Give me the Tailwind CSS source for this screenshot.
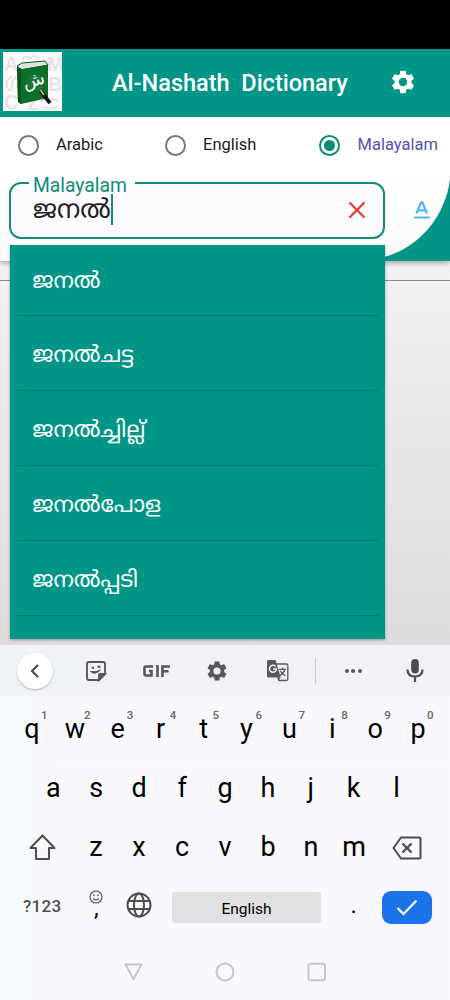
<!DOCTYPE html>
<html lang="ml">
<head>
<meta charset="utf-8">
<title>Al-Nashath Dictionary</title>
<script src="https://cdn.jsdelivr.net/npm/@tailwindcss/browser@4"></script>
</head>
<body class="w-[450px] h-[1000px] overflow-hidden bg-black font-['Roboto','Noto_Sans_Malayalam','Noto_Sans',sans-serif] flex flex-col">
<div class="h-[49px] shrink-0 bg-black"></div>
<header class="h-[68px] shrink-0 bg-[#009587] flex items-center pl-[3px] relative">
  <svg class="w-[59px] h-[59px] -mt-[3px] shrink-0" viewBox="0 0 59 59">
    <rect width="59" height="59" fill="#fff"/>
    <g fill="#e4e4e4" font-family="Liberation Sans" font-weight="700" font-size="20">
      <text x="1" y="19">A</text><text x="44" y="19">M</text><text x="45" y="39">B</text><text x="1" y="57">C</text><text x="24" y="58">Z</text>
    </g>
    <g fill="none" stroke="#e4e4e4" stroke-width="2.200">
      <path d="M9 24Q2 28 4 35Q6 39 9 38M14 24Q7 30 10 37M19 8Q23 1 27 7Q31 1 35 7M38 50Q42 44 46 50Q50 44 55 50M39 55Q47 59 56 54"/>
    </g>
    <path d="M14 14L19 11L42 9L45 13L18 18Z" fill="#e2e2e2" stroke="#0a5a22" stroke-width="1"/>
    <path d="M14 15L19 17L45 13V46L18 52L15 50Z" fill="#0b6f2b"/>
    <path d="M14 14L18 17V52L15 50Z" fill="#07541d"/>
    <circle cx="32" cy="30" r="8" fill="#22803f" opacity=".6"/>
    <text x="31.500" y="34" fill="#fff" font-family="DejaVu Sans" font-size="18" text-anchor="middle" transform="rotate(-14 31 31)">ش</text>
    <path d="M37.500 39L47 51" stroke="#16140f" stroke-width="3.800"/><path d="M37.500 38L41 43" stroke="#d8c48a" stroke-width="1.500"/>
  </svg>
  <h1 class="ml-[50px] text-white text-[23.500px] leading-[28px] font-medium whitespace-pre">Al-Nashath  Dictionary</h1>
  <svg class="absolute left-[389px] top-[19px] w-[28px] h-[28px]" viewBox="0 0 24 24" fill="#fff"><path d="M19.140 12.940c.04-.3.06-.61.06-.94s-.02-.64-.07-.94l2.030-1.580c.18-.14.23-.41.12-.61l-1.920-3.320c-.12-.22-.37-.29-.59-.22l-2.390.96c-.5-.38-1.030-.7-1.620-.94l-.36-2.540c-.04-.24-.24-.41-.48-.41h-3.840c-.24 0-.43.17-.47.41l-.36 2.540c-.59.24-1.130.57-1.620.94l-2.390-.96c-.22-.08-.47 0-.59.22L2.740 8.870c-.12.21-.08.47.12.61l2.030 1.580c-.05.3-.09.63-.09.94s.02.64.07.94l-2.030 1.580c-.18.14-.23.41-.12.61l1.920 3.320c.12.22.37.29.59.22l2.390-.96c.5.38 1.030.7 1.620.94l.36 2.540c.05.24.24.41.48.41h3.840c.24 0 .44-.17.47-.41l.36-2.540c.59-.24 1.130-.56 1.620-.94l2.390.96c.22.08.47 0 .59-.22l1.920-3.320c.12-.22.07-.47-.12-.61l-2.010-1.580zM12 15.600a3.600 3.600 0 1 1 0-7.200 3.600 3.600 0 0 1 0 7.200z"/></svg>
</header>

<main class="h-[528px] shrink-0 relative bg-linear-to-b from-[#f1f0f2] from-30% to-[#dddbdd] overflow-hidden">
  <section class="relative h-[144px] bg-[#009587] shadow-[0_2px_5px_rgba(0,0,0,0.3)]">
    <div class="h-[144px] rounded-br-[80px] bg-linear-to-b from-white from-40% to-[#fafafb]">
      <div class="flex h-[57px] items-center text-[16.500px] text-[#1c1c1c]">
        <label class="flex items-center w-[147px] pl-[17.500px]"><span class="size-[21.500px] rounded-full border-[2.500px] border-[#777] mr-[17px]"></span>Arabic</label>
        <label class="flex items-center w-[154px] pl-[17.500px]"><span class="size-[21.500px] rounded-full border-[2.500px] border-[#777] mr-[17px]"></span>English</label>
        <label class="flex items-center pl-[17.500px] text-[#5452ad]"><span class="size-[21.500px] rounded-full border-[2.500px] border-[#0b8a74] mr-[17.500px] flex items-center justify-center"><span class="size-[11.500px] rounded-full bg-[#0b8a74]"></span></span>Malayalam</label>
      </div>
    </div>
  </section>
  <svg class="absolute left-0 top-0 w-[450px] h-[144px]" viewBox="0 0 450 144"><path d="M450 62V144H370V142C410 140 445 105 450 62Z" fill="#009587"/></svg>
  <div class="absolute top-[163px] inset-x-0 h-px bg-[#8b8b8d]"></div>
  <div class="absolute left-[9px] top-[65px] w-[376px] h-[57px] rounded-[12px] border-[2.500px] border-[#128c7b] bg-[#fbfafd] flex items-center pl-[22px] pr-[16.500px]">
    <span class="absolute left-[18px] -top-[9px] w-[106px] h-[22px] pl-[4px] bg-linear-to-b from-white to-[#fbfafd] text-[19.300px] leading-[22px] text-[#128c7b]">Malayalam</span>
    <span class="relative text-[25.500px] leading-[30px] text-[#222] -mt-[3px]">ജനൽ</span>
    <span class="relative w-[2.500px] h-[31px] bg-[#128c7b] -mt-[3px]"></span>
    <svg class="ml-auto size-[20px] -mt-px" viewBox="0 0 20 20" stroke="#e2402f" stroke-width="2.300"><path d="M2.500 2.500L17.500 17.500M17.500 2.500L2.500 17.500"/></svg>
  </div>
  <svg class="absolute left-[413px] top-[83px] w-[18px] h-[20px]" viewBox="0 0 18 20" fill="none" stroke="#4fb9ea" stroke-width="2.200"><path d="M3.500 13.500L8 2.500H9.500L14 13.500M5.500 10.300H12M1 17.500H17"/></svg>
  <ul class="absolute left-[9.500px] top-[127.500px] w-[375px] h-[394.500px] bg-[#009587] px-[7px] text-white text-[22.300px] overflow-hidden shadow-[0_1px_3px_rgba(0,0,0,0.3)]">
    <li class="h-[71.500px] border-b border-[#04796d] pl-[16px] leading-[71px]">ജനൽ</li>
    <li class="h-[75px] border-b border-[#04796d] pl-[16px] leading-[77px]">ജനൽചട്ട</li>
    <li class="h-[75px] border-b border-[#04796d] pl-[16px] leading-[77px]">ജനൽച്ചില്ല്</li>
    <li class="h-[75px] border-b border-[#04796d] pl-[16px] leading-[77px]">ജനൽപോള</li>
    <li class="h-[75px] border-b border-[#04796d] pl-[16px] leading-[77px]">ജനൽപ്പടി</li>
  </ul>
</main>

<section class="flex-1 bg-linear-to-r from-[#f5fbfd] to-[#f8f8fd] to-12% flex flex-col text-black">
  <div class="h-[51px] shrink-0 bg-linear-to-r from-[#eef4f5] to-[#f1f2f6] to-20% relative text-[#56585c]">
    <div class="absolute left-[17px] top-[8px] size-[36px] rounded-full bg-white shadow-[0_1px_2px_rgba(0,0,0,0.25)] flex items-center justify-center"><svg class="size-[16px]" viewBox="0 0 16 16" fill="none" stroke="#4d4d4f" stroke-width="2.200"><path d="M11 2L5 8L11 14"/></svg></div>
    <svg class="absolute left-[85px] top-[15px] size-[22px]" viewBox="0 0 22 22" fill="none" stroke="currentColor" stroke-width="1.900"><path d="M20 14V4Q20 2 18 2H4Q2 2 2 4V18Q2 20 4 20H14L20 14"/><path d="M14 20V15Q14 14 15 14H20Z" fill="currentColor"/><path d="M5.500 11.500Q10 15.500 15.500 10Q11 12.500 5.500 11.500Z" fill="currentColor" stroke-width="1"/><path d="M6.500 7.800H9M12.500 6.800H15.500" stroke-width="2"/></svg>
    <svg class="absolute left-[143px] top-[20px] w-[28px] h-[12px]" viewBox="0 0 28 12" fill="none" stroke="currentColor" stroke-width="2.600"><path d="M10 1.500H3Q1.500 1.500 1.500 3V9Q1.500 10.500 3 10.500H8.500V6H6M14.500 0V12M19.500 12V1.500H27M19.500 6.200H25.500"/></svg>
    <svg class="absolute left-[205px] top-[14px] size-[24px]" viewBox="0 0 24 24" fill="currentColor"><path d="M19.140 12.940c.04-.3.06-.61.06-.94s-.02-.64-.07-.94l2.030-1.580c.18-.14.23-.41.12-.61l-1.920-3.320c-.12-.22-.37-.29-.59-.22l-2.390.96c-.5-.38-1.030-.7-1.620-.94l-.36-2.540c-.04-.24-.24-.41-.48-.41h-3.840c-.24 0-.43.17-.47.41l-.36 2.540c-.59.24-1.130.57-1.620.94l-2.390-.96c-.22-.08-.47 0-.59.22L2.740 8.870c-.12.21-.08.47.12.61l2.030 1.580c-.05.3-.09.63-.09.94s.02.64.07.94l-2.030 1.580c-.18.14-.23.41-.12.61l1.920 3.320c.12.22.37.29.59.22l2.390-.96c.5.38 1.030.7 1.620.94l.36 2.540c.05.24.24.41.48.41h3.840c.24 0 .44-.17.47-.41l.36-2.540c.59-.24 1.130-.56 1.620-.94l2.390.96c.22.08.47 0 .59-.22l1.920-3.320c.12-.22.07-.47-.12-.61l-2.010-1.580zM12 15.600a3.600 3.600 0 1 1 0-7.200 3.600 3.600 0 0 1 0 7.200z"/></svg>
    <svg class="absolute left-[267px] top-[15px] size-[22px]" viewBox="0 0 22 22" fill="none" stroke="currentColor"><path d="M9 4H19.500Q20.800 4 20.800 5.300V19Q20.800 20.500 19.500 20.500H11.500" stroke-width="1.300"/><path d="M0 1.500Q0 0 1.500 0H8.500L13.800 17.500H1.500Q0 17.500 0 16Z" fill="currentColor" stroke="none"/><path d="M10 17.500H13.500L11.500 21Z" fill="currentColor" stroke="none"/><path d="M8.600 6.400A3.500 3.500 0 1 0 9.500 9H6.200" stroke="#f1f2f6" stroke-width="1.500"/><path d="M12 9.300H19M15.500 7.500V9.300M17.800 9.500Q17 13 13 15.500M13.500 11Q15 14 18.300 15.800" stroke-width="1.300"/></svg>
    <div class="absolute left-[315px] top-[13px] w-px h-[26px] bg-[#c9cacd]"></div>
    <div class="absolute left-[344.500px] top-[24px] flex gap-[2.500px]"><i class="size-[4px] rounded-full bg-[#56585c]"></i><i class="size-[4px] rounded-full bg-[#56585c]"></i><i class="size-[4px] rounded-full bg-[#56585c]"></i></div>
    <svg class="absolute left-[406px] top-[14px] w-[18px] h-[24px]" viewBox="0 0 18 24" fill="none" stroke="#4d4d50" stroke-width="2.200"><rect x="5.200" y="0" width="7.600" height="14.500" rx="3.800" fill="#4d4d50" stroke="none"/><path d="M1.500 10.500Q1.500 17.500 9 17.500Q16.500 17.500 16.500 10.500M9 17.500V23"/></svg>
  </div>
  <div class="grid grid-cols-10 mx-[10.500px] h-[64px] text-[27px] leading-[66px] text-center [&>span]:relative [&_sup]:absolute [&_sup]:left-[30.500px] [&_sup]:top-[13px] [&_sup]:text-[11.500px] [&_sup]:leading-[12px] [&_sup]:text-[#66676b] [&_sup]:font-medium">
    <span>q<sup>1</sup></span><span>w<sup>2</sup></span><span>e<sup>3</sup></span><span>r<sup>4</sup></span><span>t<sup>5</sup></span><span>y<sup>6</sup></span><span>u<sup>7</sup></span><span>i<sup>8</sup></span><span>o<sup>9</sup></span><span>p<sup>0</sup></span>
  </div>
  <div class="grid grid-cols-9 mx-[32px] h-[59px] text-[27px] leading-[56px] text-center">
    <span>a</span><span>s</span><span>d</span><span>f</span><span>g</span><span>h</span><span>j</span><span>k</span><span>l</span>
  </div>
  <div class="flex mx-[10.500px] h-[59px] text-[27px] leading-[56px] text-center items-center">
    <span class="w-[64px] flex justify-center -mt-[3px]"><svg class="w-[27px] h-[26px]" viewBox="0 0 27 26" fill="none" stroke="#4d4d50" stroke-width="2" stroke-linejoin="round"><path d="M13.500 1.500L25.500 14H20V25H7V14H1.500Z"/></svg></span>
    <div class="flex-1 grid grid-cols-7 h-[59px]"><span>z</span><span>x</span><span>c</span><span>v</span><span>b</span><span>n</span><span>m</span></div>
    <span class="w-[64px] flex justify-center -mt-px pr-[2px]"><svg class="w-[30px] h-[24px]" viewBox="0 0 30 24" fill="none" stroke="#4d4d50" stroke-width="2" stroke-linejoin="round"><path d="M9 1.500H27Q28.500 1.500 28.500 3V21Q28.500 22.500 27 22.500H9L1.500 12Z"/><path d="M10.500 7.500L19.500 16.500M19.500 7.500L10.500 16.500" stroke-width="2.400"/></svg></span>
  </div>
  <div class="flex h-[59px] items-center pl-[23px] relative">
    <span class="w-[62px] text-[17px] text-[#4d4d50] tracking-[0.300px] font-medium -mt-[2px]">?123</span>
    <svg class="absolute left-[89px] top-[11.500px] size-[14px]" viewBox="0 0 14 14" fill="none" stroke="#4d4d50" stroke-width="1.100"><circle cx="7" cy="7" r="6"/><path d="M4 8.300Q7 11.500 10 8.300"/><path d="M4.300 5.200h1.400M8.300 5.200h1.400" stroke-width="1.400"/></svg>
    <span class="absolute left-[94px] top-[15.500px] text-[24px] leading-[28px]">,</span>
    <svg class="absolute left-[126px] top-[14px] size-[26px]" viewBox="0 0 26 26" fill="none" stroke="#4d4d50" stroke-width="2"><circle cx="13" cy="13" r="11.500"/><ellipse cx="13" cy="13" rx="5" ry="11.500"/><path d="M2.500 9H23.500M2.500 17H23.500"/></svg>
    <div class="absolute left-[172px] top-[14px] w-[149px] h-[31px] rounded-[3px] bg-[#e1e1e2] text-center text-[15.500px] leading-[34px]">English</div>
    <span class="absolute left-[350.500px] top-[13px] text-[24px] leading-[28px]">.</span>
    <div class="absolute left-[382px] top-[13px] w-[50px] h-[33px] rounded-[9px] bg-[#1a73e8] flex items-center justify-center"><svg class="w-[22px] h-[17px]" viewBox="0 0 22 17" fill="none" stroke="#fff" stroke-width="2.200"><path d="M1.500 9L7.500 15L20.500 1.500"/></svg></div>
  </div>
  <nav class="flex-1 relative">
    <svg class="absolute left-[123px] top-[25px] w-[204px] h-[20px]" viewBox="0 0 204 20" fill="none" stroke="#c6c5ca" stroke-width="2" stroke-linejoin="round"><path d="M2.500 2.500H18.500L10.500 17Z"/><circle cx="102" cy="10" r="8.500"/><rect x="185.500" y="1.800" width="16.500" height="16.500" rx="2"/></svg>
  </nav>
</section>
</body>
</html>
